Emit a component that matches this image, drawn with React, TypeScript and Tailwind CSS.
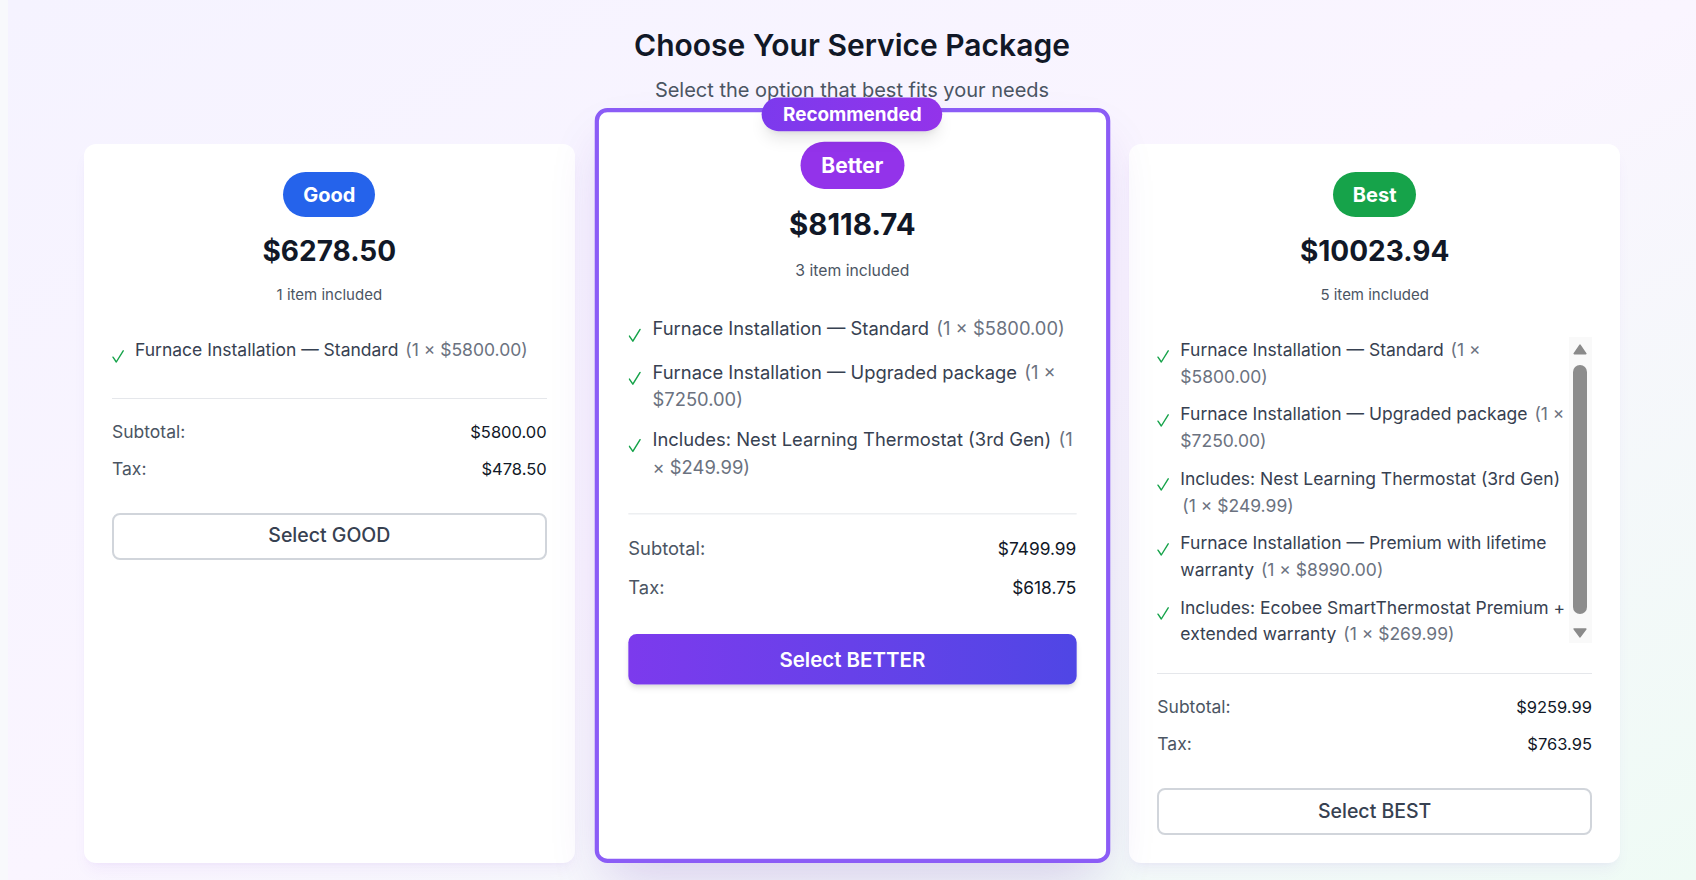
import React from "react";

type Item = { name: string; price: string };

type Pkg = {
  label: string;
  pill: string;
  total: string;
  count: number;
  items: Item[];
  subtotal: string;
  tax: string;
  button: string;
  featured?: boolean;
  scroll?: boolean;
};

const STD: Item = { name: "Furnace Installation — Standard", price: "$5800.00" };
const UPG: Item = { name: "Furnace Installation — Upgraded package", price: "$7250.00" };
const NEST: Item = { name: "Includes: Nest Learning Thermostat (3rd Gen)", price: "$249.99" };
const PREM: Item = { name: "Furnace Installation — Premium with lifetime warranty", price: "$8990.00" };
const ECO: Item = { name: "Includes: Ecobee SmartThermostat Premium + extended warranty", price: "$269.99" };

const packages: Pkg[] = [
  {
    label: "Good",
    pill: "bg-[#2563eb]",
    total: "$6278.50",
    count: 1,
    items: [STD],
    subtotal: "$5800.00",
    tax: "$478.50",
    button: "Select GOOD",
  },
  {
    label: "Better",
    pill: "bg-[#9333ea]",
    total: "$8118.74",
    count: 3,
    items: [STD, UPG, NEST],
    subtotal: "$7499.99",
    tax: "$618.75",
    button: "Select BETTER",
    featured: true,
  },
  {
    label: "Best",
    pill: "bg-[#16a34a]",
    total: "$10023.94",
    count: 5,
    items: [STD, UPG, NEST, PREM, ECO],
    subtotal: "$9259.99",
    tax: "$763.95",
    button: "Select BEST",
    scroll: true,
  },
];

function Check() {
  return (
    <svg viewBox="0 0 12 13" className="mt-[12.5px] h-[13px] w-[12px] shrink-0" fill="none">
      <path d="M1 7.2 L4.3 12 L11.2 0.8" stroke="#16a34a" strokeWidth="1.4" strokeLinecap="round" strokeLinejoin="round" />
    </svg>
  );
}

function ItemList({ items, scroll }: { items: Item[]; scroll?: boolean }) {
  return (
    <ul className={`flex max-h-[306px] flex-col gap-[11px] overflow-hidden ${scroll ? "min-w-0 flex-1" : ""}`}>
      {items.map((it, i) => (
        <li key={i} className="flex min-h-[30.5px] shrink-0 items-start gap-[11px]">
          <Check />
          <span className="text-[17.5px] leading-[26.7px] text-[#374151]">
            {it.name} <span className="ml-[2px] text-[#6b7280]">(1 × {it.price})</span>
          </span>
        </li>
      ))}
    </ul>
  );
}

function ScrollTrack() {
  return (
    <div className="flex h-[306px] w-[23px] shrink-0 flex-col items-center bg-[#f9f9f9] pt-[7px] pb-[5px]">
      <svg viewBox="0 0 14 11" className="h-[11px] w-[14px]">
        <path d="M7 1.2 L12.8 9.6 H1.2 Z" fill="#8a8a8a" stroke="#8a8a8a" strokeWidth="1.6" strokeLinejoin="round" />
      </svg>
      <div className="mt-[10px] w-[14px] flex-1 rounded-full bg-[#8c8c8c]" />
      <svg viewBox="0 0 14 10" className="mt-[14px] h-[10px] w-[14px]">
        <path d="M1.2 1 H12.8 L7 8.8 Z" fill="#8a8a8a" stroke="#8a8a8a" strokeWidth="1.6" strokeLinejoin="round" />
      </svg>
    </div>
  );
}

function Card({ p }: { p: Pkg }) {
  return (
    <div
      className={
        p.featured
          ? "relative z-10 flex flex-col rounded-xl border-4 border-[#8b5cf6] bg-white p-7 shadow-2xl shadow-[#5b21b6]/20 scale-105 -translate-y-[18px]"
          : "relative flex flex-col rounded-xl bg-white p-7 shadow-lg shadow-[#6d28d9]/5"
      }
    >
      {p.featured && (
        <div className="absolute -top-[14.5px] left-1/2 -translate-x-1/2 whitespace-nowrap rounded-full bg-linear-to-r from-[#7c3aed] to-[#9333ea] px-5 py-1 text-[18px] leading-6 font-bold text-white shadow-lg">
          Recommended
        </div>
      )}
      <div className="flex flex-col items-center text-center">
        <div className={`flex h-[45px] items-center rounded-full px-5 text-xl font-bold text-white ${p.pill}`}>
          {p.label}
        </div>
        <div className="mt-4 text-[28px] leading-9 font-bold text-[#111827]">{p.total}</div>
        <div className="mt-4 text-[15px] leading-5 text-[#4b5563]">{p.count} item included</div>
      </div>
      <div className="mt-8 flex items-start">
        <ItemList items={p.items} scroll={p.scroll} />
        {p.scroll && <ScrollTrack />}
      </div>
      <div className="mt-[30px] border-t border-[#e5e7eb] pt-[20px]">
        <div className="flex flex-col gap-[11px]">
          <div className="flex items-center justify-between leading-[26px]">
            <span className="text-[17.5px] text-[#4b5563]">Subtotal:</span>
            <span className="text-[16.5px] text-[#111827]">{p.subtotal}</span>
          </div>
          <div className="flex items-center justify-between leading-[26px]">
            <span className="text-[17.5px] text-[#4b5563]">Tax:</span>
            <span className="text-[16.5px] text-[#111827]">{p.tax}</span>
          </div>
        </div>
        {p.featured ? (
          <button className="mt-[31px] flex h-[48px] w-full items-center justify-center rounded-lg bg-linear-to-r from-[#7c3aed] to-[#4f46e5] text-[19.5px] font-semibold text-white shadow-md">
            {p.button}
          </button>
        ) : (
          <button className="mt-[31px] flex h-[47px] w-full items-center justify-center rounded-lg border-2 border-[#d1d5db] bg-white text-[19.5px] font-medium text-[#374151]">
            {p.button}
          </button>
        )}
      </div>
    </div>
  );
}

export default function App() {
  return (
    <div className="min-h-screen bg-[#f8f9fc] pl-2 font-['Inter',sans-serif]">
      <div className="min-h-screen bg-linear-to-br from-[#f5f3ff] via-[#faf5ff] to-[#effbf5] px-4 pt-[27px] pb-4">
        <div className="mx-auto max-w-[1536px]">
          <div className="text-center">
            <h1 className="text-[30px] leading-9 font-semibold text-[#111827]">Choose Your Service Package</h1>
            <p className="mt-[13px] text-xl leading-7 text-[#4b5563]">Select the option that best fits your needs</p>
          </div>
          <div className="mt-10 grid grid-cols-3 gap-8">
            {packages.map((p) => (
              <Card key={p.label} p={p} />
            ))}
          </div>
        </div>
      </div>
    </div>
  );
}
